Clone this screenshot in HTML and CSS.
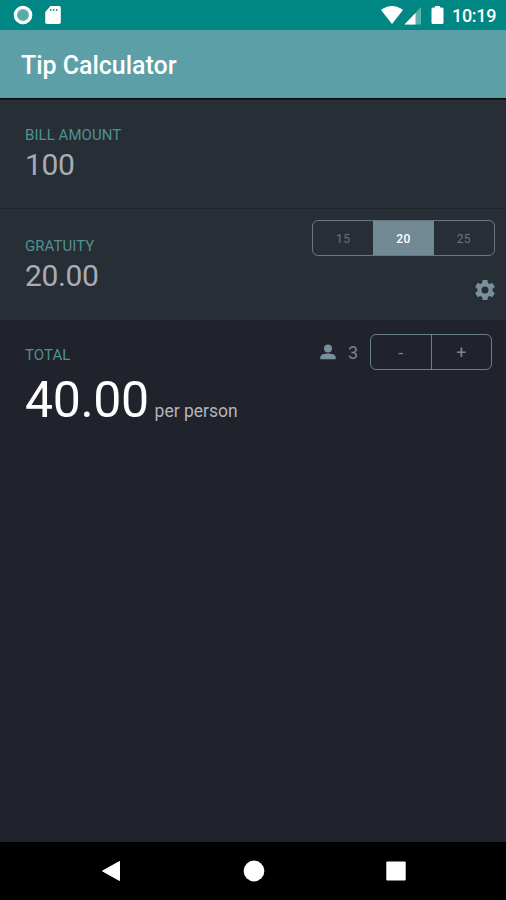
FILE: index.html
```html
<!DOCTYPE html>
<html lang="en">
<head>
<meta charset="utf-8">
<title>Tip Calculator</title>
<link rel="stylesheet" href="styles.css">
</head>
<body>
<div class="screen">
  <div class="status">
    <svg class="status-dot" width="20" height="20" viewBox="0 0 20 20"><circle cx="10" cy="10" r="7.7" fill="#62b5ad" stroke="#fff" stroke-width="3.2"/><circle cx="10" cy="10" r="4.3" fill="#55aaa4"/></svg>
    <svg class="status-card" width="16" height="20" viewBox="0 0 16 20"><path d="M5.5 1H14q1.8 0 1.8 1.8v14.4q0 1.8-1.8 1.8H2q-1.8 0-1.8-1.8V7z" fill="#fff"/><path d="M5.7 4v2M8.7 4v2M11.7 4v2" stroke="#39958f" stroke-width="1.5"/></svg>
    <div class="status-right">
      <svg class="wifi" width="24" height="20" viewBox="0 0 24 20"><path d="M1 5Q12-3 23 5L12 19z" fill="#fff"/></svg>
      <svg class="signal" width="18" height="19" viewBox="0 0 18 19"><path d="M17 1v17.5H.5z" fill="#5fb1ac"/><path d="M11.5 7v11.5H.5z" fill="#fff"/></svg>
      <svg class="battery" width="13" height="20" viewBox="0 0 13 20"><path d="M4 1h5v1.500h2q1.500 0 1.500 1.500v13.500q0 1.500-1.500 1.500H2q-1.500 0-1.500-1.500V4Q.5 2.500 2 2.500h2z" fill="#fff"/></svg>
      <span class="clock">10:19</span>
    </div>
  </div>
  <header class="appbar"><h1>Tip Calculator</h1></header>
  <section class="row bill">
    <div class="label">BILL AMOUNT</div>
    <div class="value">100</div>
  </section>
  <section class="row gratuity">
    <div>
      <div class="label">GRATUITY</div>
      <div class="value">20.00</div>
    </div>
    <div class="side">
      <div class="segments"><span>15</span><span class="active">20</span><span>25</span></div>
      <svg class="gear" width="24" height="24" viewBox="0 0 24 24"><path fill="#78909c" d="M19.430 12.980c.04-.32.07-.64.07-.98s-.03-.66-.07-.98l2.110-1.650c.19-.15.24-.42.12-.64l-2-3.460c-.12-.22-.39-.3-.61-.22l-2.490 1c-.52-.4-1.080-.73-1.690-.98l-.38-2.650C14.460 2.180 14.250 2 14 2h-4c-.25 0-.46.18-.49.42l-.38 2.650c-.61.25-1.170.59-1.690.98l-2.490-1c-.23-.09-.49 0-.61.22l-2 3.460c-.13.22-.07.49.12.64l2.110 1.650c-.04.32-.07.65-.07.98s.03.66.07.98l-2.110 1.650c-.19.15-.24.42-.12.64l2 3.460c.12.22.39.3.61.22l2.490-1c.52.4 1.080.73 1.690.98l.38 2.650c.03.24.24.42.49.42h4c.25 0 .46-.18.49-.42l.38-2.650c.61-.25 1.170-.59 1.690-.98l2.490 1c.23.09.49 0 .61-.22l2-3.460c.12-.22.07-.49-.12-.64zM12 15.500a3.500 3.500 0 1 1 0-7 3.500 3.500 0 0 1 0 7z"/></svg>
    </div>
  </section>
  <section class="total">
    <div>
      <div class="label">TOTAL</div>
      <div class="amount"><span class="sum">40.00</span><span class="per">per person</span></div>
    </div>
    <div class="people">
      <svg width="16" height="16" viewBox="0 0 16 16"><circle cx="8" cy="4.500" r="4" fill="#78909c"/><path d="M.3 15.300v-2C.3 10.600 5 9.600 8 9.600s7.700 1 7.700 3.700v2z" fill="#78909c"/></svg>
      <span class="count">3</span>
      <div class="stepper"><span>-</span><span>+</span></div>
    </div>
  </section>
  <nav class="navbar">
    <svg width="20" height="22" viewBox="0 0 20 22"><path d="M18.500 1.500v19L1.500 11z" fill="#fff" stroke="#fff" stroke-linejoin="round"/></svg>
    <svg width="22" height="22" viewBox="0 0 22 22"><circle cx="11" cy="11" r="10.400" fill="#fff"/></svg>
    <svg width="20" height="20" viewBox="0 0 20 20"><rect x=".3" y=".5" width="19.400" height="19" rx="1" fill="#fff"/></svg>
  </nav>
</div>
</body>
</html>
```
FILE: styles.css
```css
* { box-sizing: border-box; }
body { margin: 0; background: #20232c; font-family: Roboto, "Liberation Sans", sans-serif; }
svg { display: block; flex: none; }
.screen { width: 506px; height: 900px; display: flex; flex-direction: column; overflow: hidden; }
.status { height: 30px; flex: none; background: #008784; display: flex; align-items: center; padding: 0 10px 0 13px; }
.status-card { margin-left: 12px; }
.status-right { margin-left: auto; display: flex; align-items: center; }
.battery { margin-left: 9px; }
.clock { color: #fff; font-size: 18px; font-weight: 500; line-height: 20px; margin: 2px 0 0 8px; width: 44px; white-space: nowrap; letter-spacing: -.3px; }
.appbar { height: 69px; flex: none; background: #5c9fa7; border-bottom: 1px solid #080b0e; display: flex; align-items: center; padding: 3px 20px 0 21px; }
h1 { margin: 0; color: #fff; font-size: 25px; line-height: 30px; font-weight: 500; letter-spacing: -.03px; }
.row { flex: none; background: #282e36; padding-left: 25px; }
.bill { height: 110px; padding-top: 26px; border-top: 1px solid #15191e; border-bottom: 1px solid #20242b; }
.gratuity { height: 111px; padding-top: 28px; display: flex; justify-content: space-between; }
.label { color: #4f918f; font-size: 15px; line-height: 18px; letter-spacing: .05px; }
.value { color: #a9abb5; font-size: 30px; line-height: 36px; margin-top: 3px; letter-spacing: -.4px; }
.side { display: flex; flex-direction: column; align-items: flex-end; margin-top: -17px; padding-right: 11px; }
.segments, .stepper { display: flex; border: 1.500px solid #69777f; border-radius: 6px; height: 36px; overflow: hidden; }
.segments { width: 183px; font-size: 12px; color: #69757d; }
.segments span, .stepper span { flex: 1; display: flex; align-items: center; justify-content: center; }
.segments span { letter-spacing: .4px; padding-top: 1px; }
.segments .active { background: #718994; color: #fff; font-weight: 500; }
.gear { margin: 22px -2px 0 0; }
.total { flex: 1; padding: 26px 14px 0 25px; display: flex; justify-content: space-between; align-items: flex-start; }
.amount { display: flex; align-items: baseline; margin-top: 6px; }
.sum { color: #fff; font-size: 50px; line-height: 60px; letter-spacing: -.4px; }
.per { color: #b3b5bc; font-size: 17.500px; margin-left: 6px; }
.people { display: flex; align-items: center; margin-top: -12px; }
.people svg { position: relative; left: -1px; }
.count { color: #78858d; font-size: 18px; margin: 0 12px 0 11px; }
.stepper { width: 122px; border-color: #6b7f87; color: #78858d; font-size: 18px; }
.stepper span + span { border-left: 1.500px solid #6b7f87; }
.navbar { height: 58px; flex: none; background: #000; display: flex; align-items: center; justify-content: space-between; padding: 0 100px 0 101px; }
```
